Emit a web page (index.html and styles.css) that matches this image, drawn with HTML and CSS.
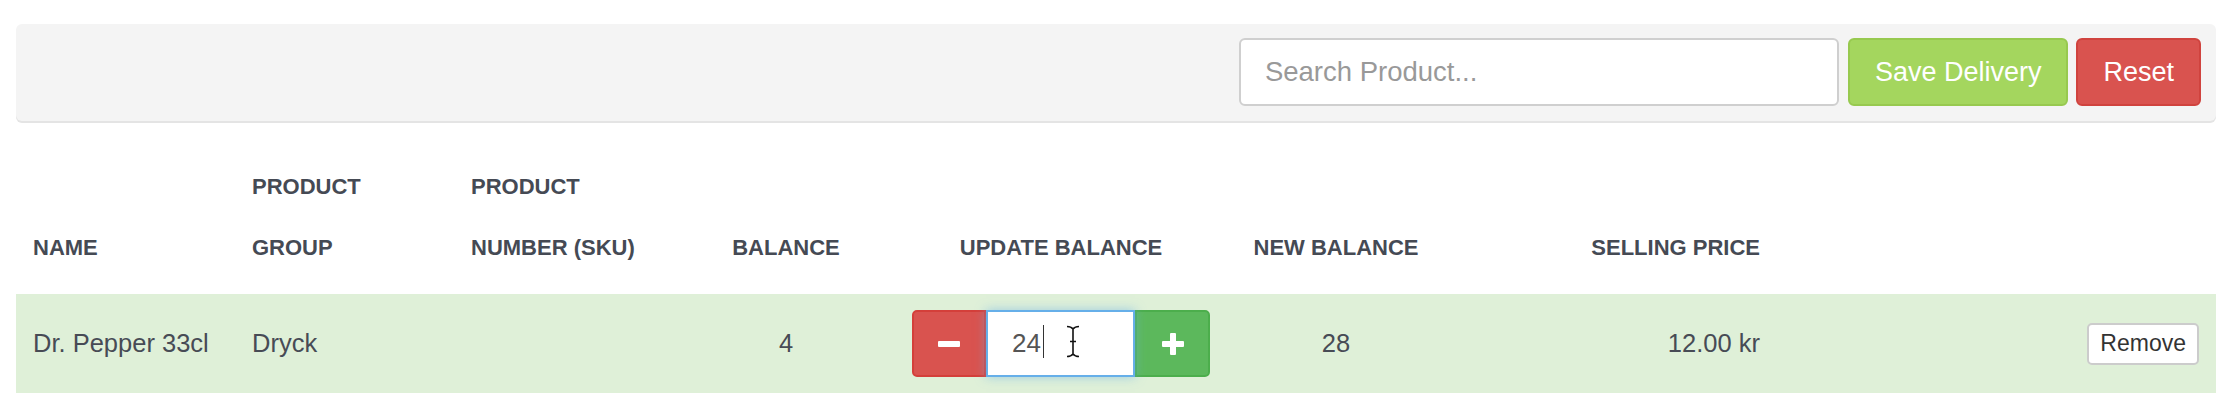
FILE: index.html
```html
<!DOCTYPE HTML>
<html>
<head>
  <meta charset="UTF-8">
  <title>Delivery</title>
  <link rel="stylesheet" href="styles.css">
</head>
<body>
  <div id="wrap">
    <!--search and actions-->
    <div class="toolbar">
      <input class="search" type="text" placeholder="Search Product...">
      <button class="btn btn-save">Save Delivery</button>
      <button class="btn btn-reset">Reset</button>
    </div>

    <!--delivery table-->
    <table class="delivery">
      <colgroup>
        <col class="c-name">
        <col class="c-group">
        <col class="c-sku">
        <col class="c-balance">
        <col class="c-update">
        <col class="c-new">
        <col class="c-price">
        <col>
      </colgroup>
      <thead>
        <tr>
          <th>NAME</th>
          <th>PRODUCT<br>GROUP</th>
          <th>PRODUCT<br>NUMBER (SKU)</th>
          <th class="center">BALANCE</th>
          <th class="center">UPDATE BALANCE</th>
          <th class="center">NEW BALANCE</th>
          <th class="right">SELLING PRICE</th>
          <th></th>
        </tr>
      </thead>
      <tbody>
        <tr class="success">
          <td>Dr. Pepper 33cl</td>
          <td>Dryck</td>
          <td></td>
          <td class="center">4</td>
          <td class="center qty-cell">
            <div class="qty">
              <button class="qty-btn minus">
                <svg width="22" height="22" viewBox="0 0 22 22"><rect x="0" y="8" width="22" height="6" rx="1" fill="#fff"/></svg>
              </button>
              <div class="qty-field">24<span class="caret"></span>
                <svg class="ibeam" width="16" height="33" viewBox="0 0 16 33">
                  <path d="M2 1.5 Q6 1.5 8 4 Q10 1.5 14 1.5 M8 4 V29 M2 31.5 Q6 31.5 8 29 Q10 31.5 14 31.5 M5 16.5 H11" fill="none" stroke="#fff" stroke-width="4"/>
                  <path d="M2 1.5 Q6 1.5 8 4 Q10 1.5 14 1.5 M8 4 V29 M2 31.5 Q6 31.5 8 29 Q10 31.5 14 31.5 M5 16.5 H11" fill="none" stroke="#111" stroke-width="1.6"/>
                </svg>
              </div>
              <button class="qty-btn plus">
                <svg width="22" height="22" viewBox="0 0 22 22"><rect x="8" y="0" width="6" height="22" rx="1" fill="#fff"/><rect x="0" y="8" width="22" height="6" rx="1" fill="#fff"/></svg>
              </button>
            </div>
          </td>
          <td class="center">28</td>
          <td class="right">12.00 kr</td>
          <td class="right"><button class="btn-remove">Remove</button></td>
        </tr>
      </tbody>
    </table>
  </div>
</body>
</html>
```

FILE: styles.css
```css
body{margin:0;font-family:"Liberation Sans",Arial,sans-serif;color:#464a54;background:#fff;}

#wrap{
  padding: 24px 22px 0 16px;
}

/* toolbar */
.toolbar{
  display: flex;
  justify-content: flex-end;
  align-items: center;
  gap: 8px;
  padding: 14px 15px 15px;
  background-color: #f4f4f4;
  border-radius: 6px;
  box-shadow: 0 2px 0 #e4e4e4;
}
.search{
  box-sizing: border-box;
  width: 600px;
  height: 68px;
  margin-right: 1px;
  padding: 0 24px;
  border: 2px solid #cfcfcf;
  border-radius: 6px;
  font-family: inherit;
  font-size: 27.5px;
  color: #555;
  background: #fff;
  outline: none;
}
.search::placeholder{color:#999;}
.btn{
  box-sizing: border-box;
  height: 68px;
  padding: 0 25px;
  border: 2px solid;
  border-radius: 6px;
  font-family: inherit;
  font-size: 27px;
  color: #fff;
  cursor: pointer;
}
.btn-save{
  background-color: #a4d65e;
  border-color: #97c94f;
}
.btn-reset{
  background-color: #d9534f;
  border-color: #d0433e;
}

/* table */
.delivery{
  width: 100%;
  margin-top: 21px;
  border-collapse: collapse;
  table-layout: fixed;
}
.c-name,.c-group,.c-sku{width:219px;}
.c-balance,.c-new{width:226px;}
.c-update{width:324px;}
.c-price{width:328px;}

.delivery th{
  padding: 14px 17px 16px;
  vertical-align: bottom;
  text-align: left;
  font-size: 22px;
  line-height: 61px;
  font-weight: bold;
  color: #454a54;
  white-space: nowrap;
}
.delivery td{
  height: 67px;
  padding: 16px 17px;
  vertical-align: middle;
  font-size: 25.5px;
  color: #474b55;
  white-space: nowrap;
}
.delivery tr.success td{background-color:#dff0d8;}
.delivery .center{text-align:center;}
.delivery .right{text-align:right;}
.delivery td.qty-cell{padding:16px 0;}

/* quantity widget */
.qty{
  display: inline-flex;
  vertical-align: middle;
  height: 67px;
}
.qty-btn{
  box-sizing: border-box;
  display: flex;
  align-items: center;
  justify-content: center;
  height: 100%;
  padding: 0;
  border: 2px solid;
  cursor: pointer;
}
.qty-btn.minus{
  width: 74px;
  background-color: #d9534f;
  border-color: #d43f3a;
  border-radius: 5px 0 0 5px;
}
.qty-btn.plus{
  width: 75px;
  background-color: #5cb85c;
  border-color: #4cae4c;
  border-radius: 0 5px 5px 0;
}
.qty-field{
  position: relative;
  box-sizing: border-box;
  width: 149px;
  height: 100%;
  padding-left: 24px;
  border: 2px solid #66afe9;
  background: #fff;
  text-align: left;
  font-size: 26px;
  line-height: 63px;
  color: #555;
  box-shadow: 0 0 10px rgba(102,175,233,.55);
  z-index: 1;
}
.caret{
  display: inline-block;
  width: 1.5px;
  height: 33px;
  margin-left: 2px;
  vertical-align: -6px;
  background: #333;
}
.ibeam{
  position: absolute;
  top: 13px;
  left: 77px;
}

.btn-remove{
  box-sizing: border-box;
  height: 42px;
  padding: 0 11px;
  border: 2px solid #ccc;
  border-radius: 5px;
  background: #fff;
  font-family: inherit;
  font-size: 23px;
  color: #333;
  cursor: pointer;
  vertical-align: middle;
}
```
